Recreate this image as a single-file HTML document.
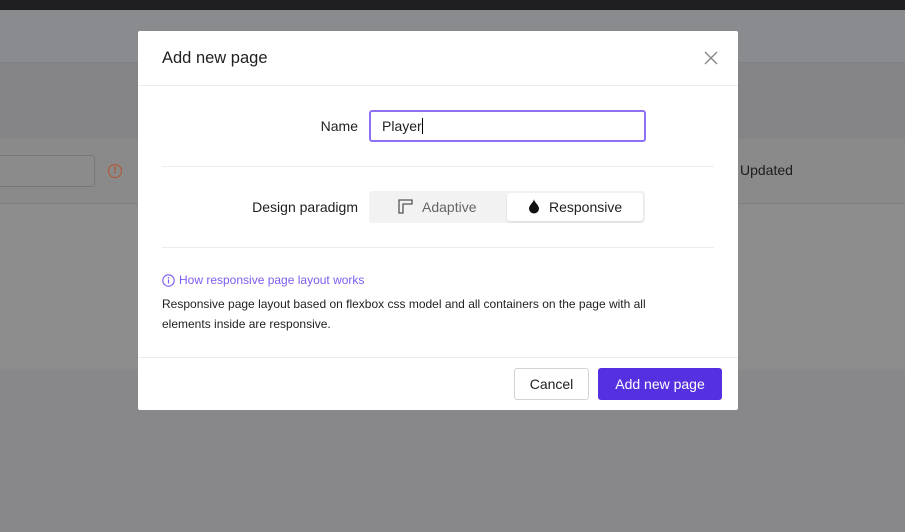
<!DOCTYPE html>
<html><head><meta charset="utf-8"><style>
*{box-sizing:border-box;margin:0;padding:0}
body{width:905px;height:532px;overflow:hidden;background:#88888a;font-family:"Liberation Sans",sans-serif;position:relative;color:#1f1f1f}
.a{position:absolute}
</style></head><body>
<div class="a" style="left:0;top:0;width:905px;height:10px;background:#1f1f21"></div>
<div class="a" style="left:0;top:10px;width:905px;height:52px;background:#8a8b8e"></div>
<div class="a" style="left:0;top:62px;width:905px;height:1px;background:#7f8084"></div>
<div class="a" style="left:0;top:63px;width:905px;height:76px;background:#858587"></div>
<div class="a" style="left:0;top:139px;width:905px;height:64px;background:#8a8a8a"></div>
<div class="a" style="left:0;top:203px;width:905px;height:1px;background:#7e7e7e"></div>
<div class="a" style="left:0;top:204px;width:905px;height:166px;background:#8c8c8c"></div>
<div class="a" style="left:-5px;top:155px;width:100px;height:32px;border:1px solid #777;border-radius:3px;background:#8b8b8b"></div>
<div class="a" style="left:108px;top:164px;width:14px;height:14px;border:1.5px solid #b5532e;border-radius:50%;color:#b5532e;font-size:10px;font-weight:bold;text-align:center;line-height:11px">!</div>
<div class="a" style="left:740px;top:162px;font-size:14px;color:#1c1c1c">Updated</div>

<div class="a" style="left:138px;top:31px;width:600px;height:379px;background:#fff;border-radius:2px">
  <div class="a" style="left:24px;top:18px;font-size:16.5px;color:#1f1f1f">Add new page</div>
  <svg class="a" style="left:566px;top:20px" width="14" height="14" viewBox="0 0 14 14"><path d="M1 1L13 13M13 1L1 13" stroke="#888" stroke-width="1.4"/></svg>
  <div class="a" style="left:0;top:54px;width:600px;height:1px;background:#ececec"></div>
  <div class="a" style="left:120px;top:87px;width:100px;text-align:right;font-size:14px">Name</div>
  <div class="a" style="left:231px;top:79px;width:277px;height:32px;border:2px solid #8e70f2;border-radius:3px;font-size:14px;padding:6px 0 0 11px;color:#222">Player<span style="border-left:1px solid #000;margin-left:0"></span></div>
  <div class="a" style="left:24px;top:135px;width:552px;height:1px;background:#ececec"></div>
  <div class="a" style="left:60px;top:168px;width:160px;text-align:right;font-size:14px">Design paradigm</div>
  <div class="a" style="left:231px;top:160px;width:276px;height:32px;background:#f2f2f2;border-radius:3px"></div>
  <svg class="a" style="left:260px;top:168px" width="15" height="15" viewBox="0 0 15 15"><path d="M1 1H14V5H5V14H1Z" fill="none" stroke="#555" stroke-width="1.3"/></svg>
  <div class="a" style="left:284px;top:168px;font-size:14px;color:#666">Adaptive</div>
  <div class="a" style="left:369px;top:162px;width:136px;height:28px;background:#fff;border-radius:3px;box-shadow:0 1px 2px rgba(0,0,0,.12)"></div>
  <svg class="a" style="left:390px;top:168px" width="12" height="15" viewBox="0 0 12 15"><path d="M6 0C6 3 11 6 11 9.5A5 5 0 0 1 1 9.5C1 6 6 3 6 0Z" fill="#111"/></svg>
  <div class="a" style="left:411px;top:168px;font-size:14px">Responsive</div>
  <div class="a" style="left:24px;top:216px;width:552px;height:1px;background:#ececec"></div>
  <svg class="a" style="left:24px;top:243px" width="13" height="13" viewBox="0 0 13 13"><circle cx="6.5" cy="6.5" r="5.7" fill="none" stroke="#7d5cf2" stroke-width="1.1"/><path d="M6.5 5.5V9.5" stroke="#7d5cf2" stroke-width="1.2"/><circle cx="6.5" cy="3.8" r=".8" fill="#7d5cf2"/></svg>
  <div class="a" style="left:41px;top:242px;font-size:12px;color:#7d5cf2">How responsive page layout works</div>
  <div class="a" style="left:24px;top:263px;width:520px;font-size:12px;line-height:20px;color:#1f1f1f">Responsive page layout based on flexbox css model and all containers on the page with all elements inside are responsive.</div>
  <div class="a" style="left:0;top:326px;width:600px;height:1px;background:#ececec"></div>
  <div class="a" style="left:376px;top:337px;width:75px;height:32px;border:1px solid #d4d4d4;border-radius:3px;font-size:14px;text-align:center;line-height:30px">Cancel</div>
  <div class="a" style="left:460px;top:337px;width:124px;height:32px;background:#5530e0;border-radius:3px;font-size:14px;text-align:center;line-height:32px;color:#fff">Add new page</div>
</div>
</body></html>
